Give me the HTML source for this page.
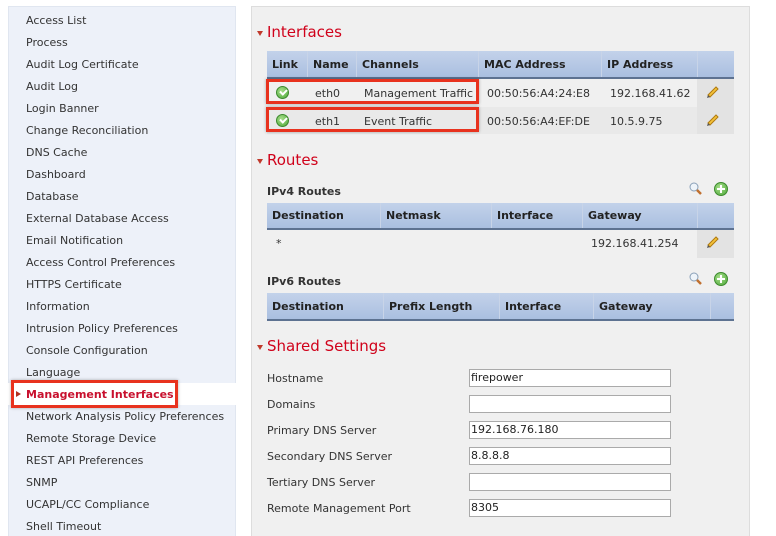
<!DOCTYPE html>
<html><head><style>
*{box-sizing:border-box;margin:0;padding:0}
html,body{width:776px;height:536px;overflow:hidden}
body{background:#fff;font-family:"DejaVu Sans","Liberation Sans",sans-serif;font-size:11px;color:#333;position:relative}
.side{position:absolute;left:8px;top:6px;width:228px;height:530px;background:#edf1f9;border:1px solid #e0e6f0;border-bottom:none}
.it{position:absolute;left:26px;font-size:11px;color:#333;line-height:14px}
.sel{position:absolute;left:8px;top:383px;width:228px;height:22px;background:#fff}
.redbox{position:absolute;border:3px solid #e8321e;box-shadow:0 0 3px rgba(0,0,0,.3)}
.main{position:absolute;left:251px;top:6px;width:499px;height:530px;background:#f0f0f0;border:1px solid #ddd;border-bottom:none}
.h{position:absolute;left:267px;font-size:15px;color:#d0021b;font-family:"DejaVu Sans",sans-serif}
.tri{position:absolute;left:257px;width:0;height:0;border-left:3px solid transparent;border-right:3px solid transparent;border-top:5px solid #c0392b}
.thead{position:absolute;left:267px;width:467px;background:linear-gradient(#c3d2ea,#aabfe0);border-bottom:2px solid #5d7291}
.th{position:absolute;top:0;height:100%;font-weight:bold;font-size:11px;color:#222;padding-left:5px;border-left:1px solid #c8d4e8;display:flex;align-items:center}
.t{position:absolute;font-size:11px;color:#333;line-height:14px}
.b{font-weight:bold}
.ok{position:absolute;width:13px;height:13px;border-radius:50%;background:radial-gradient(circle at 40% 35%,#a6de8a,#4ea83a);border:1px solid #3d8a2e}
.ok:after{content:"";position:absolute;left:3px;top:2px;width:5px;height:3px;border-left:2px solid #fff;border-bottom:2px solid #fff;transform:rotate(-45deg)}
.plus{position:absolute;width:14px;height:14px;border-radius:50%;background:radial-gradient(circle at 40% 35%,#a6de8a,#4ea83a);border:1px solid #3d8a2e}
.plus:before{content:"";position:absolute;left:5px;top:2px;width:2px;height:8px;background:#fff}
.plus:after{content:"";position:absolute;left:2px;top:5px;width:8px;height:2px;background:#fff}
.inp{position:absolute;left:469px;width:202px;height:18px;background:#fff;border:1px solid #aaa;font-size:11px;padding-left:1px;line-height:16px;color:#222}
.editc{position:absolute;left:697px;width:37px;background:#e3e3e3}
svg{position:absolute}
</style></head><body>
<div class="side"></div>
<div class="sel"></div>
<div class="it" style="top:14px">Access List</div>
<div class="it" style="top:36px">Process</div>
<div class="it" style="top:58px">Audit Log Certificate</div>
<div class="it" style="top:80px">Audit Log</div>
<div class="it" style="top:102px">Login Banner</div>
<div class="it" style="top:124px">Change Reconciliation</div>
<div class="it" style="top:146px">DNS Cache</div>
<div class="it" style="top:168px">Dashboard</div>
<div class="it" style="top:190px">Database</div>
<div class="it" style="top:212px">External Database Access</div>
<div class="it" style="top:234px">Email Notification</div>
<div class="it" style="top:256px">Access Control Preferences</div>
<div class="it" style="top:278px">HTTPS Certificate</div>
<div class="it" style="top:300px">Information</div>
<div class="it" style="top:322px">Intrusion Policy Preferences</div>
<div class="it" style="top:344px">Console Configuration</div>
<div class="it" style="top:366px">Language</div>
<div class="it b" style="top:388px;color:#c8102e">Management Interfaces</div>
<div style="position:absolute;left:16px;top:391px;border-top:3px solid transparent;border-bottom:3px solid transparent;border-left:5px solid #b03020"></div>
<div class="redbox" style="left:11px;top:380px;width:167px;height:28px"></div>
<div class="it" style="top:410px">Network Analysis Policy Preferences</div>
<div class="it" style="top:432px">Remote Storage Device</div>
<div class="it" style="top:454px">REST API Preferences</div>
<div class="it" style="top:476px">SNMP</div>
<div class="it" style="top:498px">UCAPL/CC Compliance</div>
<div class="it" style="top:520px">Shell Timeout</div>

<div class="main"></div>
<div class="tri" style="top:31px"></div><div class="h" style="top:23px">Interfaces</div>
<div class="thead" style="top:51px;height:28px">
<div class="th" style="left:0;border-left:none">Link</div><div class="th" style="left:40px">Name</div><div class="th" style="left:89px">Channels</div><div class="th" style="left:211px">MAC Address</div><div class="th" style="left:334px">IP Address</div><div class="th" style="left:430px"></div></div>
<div style="position:absolute;left:267px;top:107px;width:467px;height:27px;background:#e9e9e9"></div>
<div class="editc" style="top:79px;height:55px"></div>
<div class="ok" style="left:276px;top:86px"></div><div class="t" style="left:315px;top:87px">eth0</div><div class="t" style="left:364px;top:87px">Management Traffic</div><div class="t" style="left:487px;top:87px">00:50:56:A4:24:E8</div><div class="t" style="left:610px;top:87px">192.168.41.62</div>
<div class="ok" style="left:276px;top:114px"></div><div class="t" style="left:315px;top:115px">eth1</div><div class="t" style="left:364px;top:115px">Event Traffic</div><div class="t" style="left:487px;top:115px">00:50:56:A4:EF:DE</div><div class="t" style="left:610px;top:115px">10.5.9.75</div>
<svg style="left:705px;top:84px" width="16" height="16" viewBox="0 0 16 16"><path d="M3 11 L11 3 L13 5 L5 13 Z" fill="#f3c23a" stroke="#b07a10" stroke-width="1"/><path d="M3 11 L2 14 L5 13 Z" fill="#555"/></svg>
<svg style="left:705px;top:112px" width="16" height="16" viewBox="0 0 16 16"><path d="M3 11 L11 3 L13 5 L5 13 Z" fill="#f3c23a" stroke="#b07a10" stroke-width="1"/><path d="M3 11 L2 14 L5 13 Z" fill="#555"/></svg>
<div class="redbox" style="left:266px;top:79px;width:213px;height:25px"></div>
<div class="redbox" style="left:266px;top:107px;width:213px;height:25px"></div>

<div class="tri" style="top:159px"></div><div class="h" style="top:151px">Routes</div>
<div class="t b" style="left:267px;top:185px">IPv4 Routes</div>
<svg style="left:688px;top:181px" width="16" height="16" viewBox="0 0 16 16"><circle cx="6" cy="6" r="4" fill="#eef4fa" stroke="#8aa0b8"/><path d="M9 9 L13 13" stroke="#c07030" stroke-width="2.5"/></svg>
<div class="plus" style="left:714px;top:182px"></div>
<div class="thead" style="top:203px;height:27px">
<div class="th" style="left:0;border-left:none">Destination</div><div class="th" style="left:113px">Netmask</div><div class="th" style="left:224px">Interface</div><div class="th" style="left:315px">Gateway</div><div class="th" style="left:430px"></div></div>
<div class="editc" style="top:230px;height:28px"></div>
<div class="t" style="left:276px;top:237px">*</div><div class="t" style="left:591px;top:237px">192.168.41.254</div>
<svg style="left:705px;top:234px" width="16" height="16" viewBox="0 0 16 16"><path d="M3 11 L11 3 L13 5 L5 13 Z" fill="#f3c23a" stroke="#b07a10" stroke-width="1"/><path d="M3 11 L2 14 L5 13 Z" fill="#555"/></svg>
<div class="t b" style="left:267px;top:275px">IPv6 Routes</div>
<svg style="left:688px;top:271px" width="16" height="16" viewBox="0 0 16 16"><circle cx="6" cy="6" r="4" fill="#eef4fa" stroke="#8aa0b8"/><path d="M9 9 L13 13" stroke="#c07030" stroke-width="2.5"/></svg>
<div class="plus" style="left:714px;top:272px"></div>
<div class="thead" style="top:293px;height:28px">
<div class="th" style="left:0;border-left:none">Destination</div><div class="th" style="left:116px">Prefix Length</div><div class="th" style="left:232px">Interface</div><div class="th" style="left:326px">Gateway</div><div class="th" style="left:443px"></div></div>

<div class="tri" style="top:345px"></div><div class="h" style="top:337px">Shared Settings</div>
<div class="t" style="left:267px;top:372px">Hostname</div><div class="inp" style="top:369px">firepower</div>
<div class="t" style="left:267px;top:398px">Domains</div><div class="inp" style="top:395px"></div>
<div class="t" style="left:267px;top:424px">Primary DNS Server</div><div class="inp" style="top:421px">192.168.76.180</div>
<div class="t" style="left:267px;top:450px">Secondary DNS Server</div><div class="inp" style="top:447px">8.8.8.8</div>
<div class="t" style="left:267px;top:476px">Tertiary DNS Server</div><div class="inp" style="top:473px"></div>
<div class="t" style="left:267px;top:502px">Remote Management Port</div><div class="inp" style="top:499px">8305</div>
</body></html>
